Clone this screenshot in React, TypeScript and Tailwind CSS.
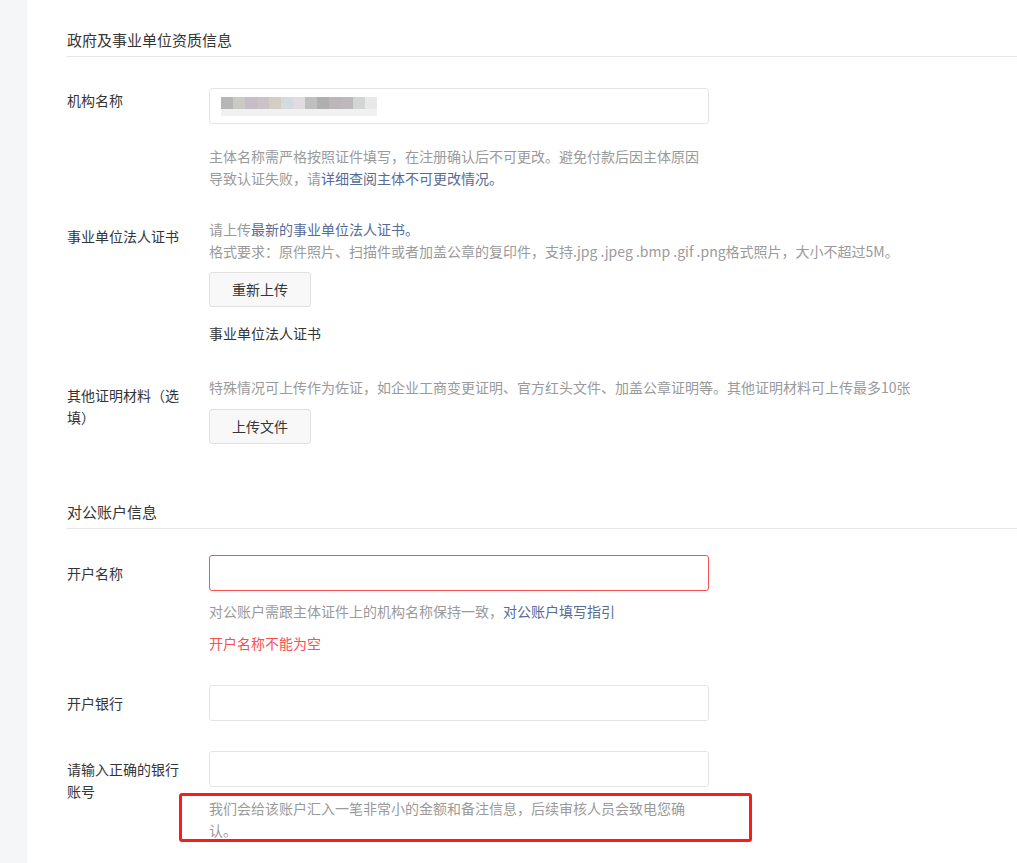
import React from "react";

const font = "font-['Noto_Sans_CJK_SC','Noto_Sans',sans-serif]";

function SectionTitle({ children, className = "" }: { children: React.ReactNode; className?: string }) {
  return (
    <div className={`border-b border-[#e7e7eb] pb-[5px] text-[15px] leading-[22px] text-[#353535] ${className}`}>
      {children}
    </div>
  );
}

function Label({ children, pt }: { children: React.ReactNode; pt: string }) {
  return (
    <div className={`w-[120px] mr-[22px] shrink-0 text-[14px] leading-[22px] text-[#353535] ${pt}`}>{children}</div>
  );
}

function Input({ error = false }: { error?: boolean }) {
  return (
    <div
      className={`h-[36px] w-[500px] rounded-[3px] border bg-white ${
        error ? "border-[#fa5151]" : "border-[#e5e5e5]"
      }`}
    />
  );
}

function Btn({ children }: { children: React.ReactNode }) {
  return (
    <div className="flex h-[35px] w-[102px] items-center justify-center rounded-[3px] border border-[#e0e0e0] bg-[#f8f8f8] text-[14px] text-[#353535]">
      {children}
    </div>
  );
}

const blurTop = [
  "bg-[#b6b6b9]",
  "bg-[#c9cac4]",
  "bg-[#c6bdc7]",
  "bg-[#c8c4c8]",
  "bg-[#d3cdc3]",
  "bg-[#d4dbdf]",
  "bg-[#e0dcdf]",
  "bg-[#bfbfbf]",
  "bg-[#b0afb0]",
  "bg-[#bbb6b9]",
  "bg-[#bdb8bb]",
  "bg-[#d3d5d5]",
  "bg-[#e8e8e8]",
];

export default function App() {
  return (
    <div className={`flex min-h-[863px] w-full bg-white ${font}`}>
      <div className="w-[27px] shrink-0 bg-[#f5f6f8]" />
      <div className="flex-1 pl-[40px] pt-[29px]">
        <SectionTitle>政府及事业单位资质信息</SectionTitle>

        {/* 机构名称 */}
        <div className="mt-[31px] flex">
          <Label pt="pt-[1px]">机构名称</Label>
          <div>
            <div className="flex h-[36px] w-[500px] items-center rounded-[3px] border border-[#e5e5e5] bg-white pl-[11px]">
              <div className="flex flex-col blur-[0.6px]">
                <div className="flex">
                  {blurTop.map((c, i) => (
                    <div key={i} className={`h-[12px] w-[12px] ${c}`} />
                  ))}
                </div>
                <div className="flex">
                  {blurTop.map((_, i) => (
                    <div key={i} className="h-[7px] w-[12px] bg-[#f1f1f1]" />
                  ))}
                </div>
              </div>
            </div>
            <p className="mt-[21px] w-[500px] text-[14px] leading-[22px] text-[#9a9a9a]">
              主体名称需严格按照证件填写，在注册确认后不可更改。避免付款后因主体原因导致认证失败，请
              <span className="text-[#576b95]">详细查阅主体不可更改情况。</span>
            </p>
          </div>
        </div>

        {/* 事业单位法人证书 */}
        <div className="mt-[29px] flex">
          <Label pt="pt-[7px]">事业单位法人证书</Label>
          <div>
            <p className="text-[14px] leading-[22px] text-[#9a9a9a]">
              请上传<span className="text-[#576b95]">最新的事业单位法人证书。</span>
            </p>
            <p className="text-[14px] leading-[22px] text-[#9a9a9a]">
              格式要求：原件照片、扫描件或者加盖公章的复印件，支持.jpg .jpeg .bmp .gif .png格式照片，大小不超过5M。
            </p>
            <div className="mt-[10px]">
              <Btn>重新上传</Btn>
            </div>
            <p className="mt-[15px] text-[14px] leading-[22px] text-[#353535]">事业单位法人证书</p>
          </div>
        </div>

        {/* 其他证明材料 */}
        <div className="mt-[32px] flex">
          <Label pt="pt-[8px]">其他证明材料（选填）</Label>
          <div>
            <p className="text-[14px] leading-[22px] text-[#9a9a9a]">
              特殊情况可上传作为佐证，如企业工商变更证明、官方红头文件、加盖公章证明等。其他证明材料可上传最多10张
            </p>
            <div className="mt-[11px]">
              <Btn>上传文件</Btn>
            </div>
          </div>
        </div>

        <SectionTitle className="mt-[57px]">对公账户信息</SectionTitle>

        {/* 开户名称 */}
        <div className="mt-[26px] flex">
          <Label pt="pt-[7px]">开户名称</Label>
          <div>
            <Input error />
            <p className="mt-[9px] text-[14px] leading-[22px] text-[#9a9a9a]">
              对公账户需跟主体证件上的机构名称保持一致，<span className="text-[#576b95]">对公账户填写指引</span>
            </p>
            <p className="mt-[10px] text-[14px] leading-[22px] text-[#fa5151]">开户名称不能为空</p>
          </div>
        </div>

        {/* 开户银行 */}
        <div className="mt-[31px] flex">
          <Label pt="pt-[7px]">开户银行</Label>
          <Input />
        </div>

        {/* 银行账号 */}
        <div className="mt-[30px] flex">
          <Label pt="pt-[7px]">请输入正确的银行账号</Label>
          <div>
            <Input />
            <div className="relative mt-[10px] w-[480px]">
              <p className="text-[14px] leading-[22px] text-[#9a9a9a]">
                我们会给该账户汇入一笔非常小的金额和备注信息，后续审核人员会致电您确认。
              </p>
              <div className="pointer-events-none absolute left-[-30px] top-[-4px] h-[49px] w-[573px] rounded-[3px] border-[3px] border-[#ff1a1a]" />
            </div>
          </div>
        </div>
      </div>
    </div>
  );
}
